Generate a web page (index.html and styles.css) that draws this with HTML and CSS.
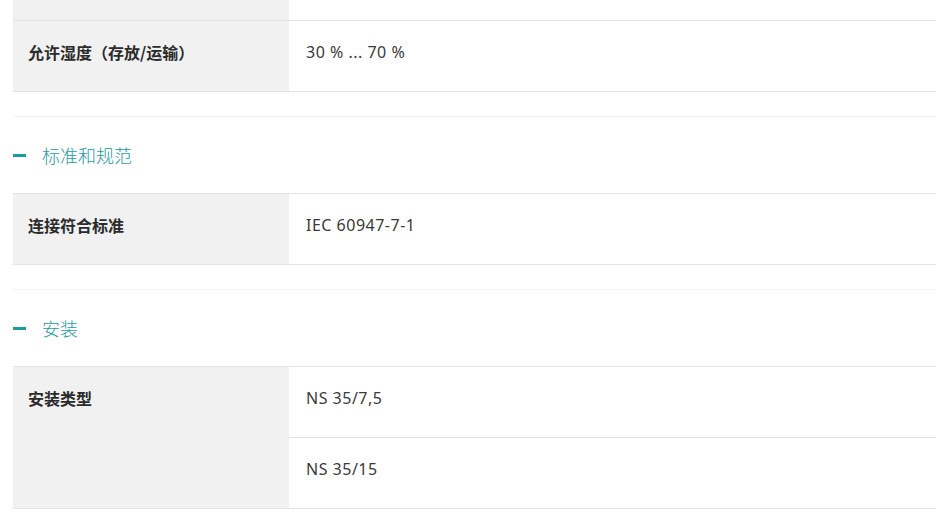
FILE: index.html
```html
<!DOCTYPE html>
<html lang="zh">
<head>
<meta charset="utf-8">
<link rel="stylesheet" href="styles.css">
</head>
<body>
<div class="page">
  <section class="group">
    <div class="table">
      <div class="row stub"><div class="label"></div><div class="values"></div></div>
      <div class="row">
        <div class="label">允许湿度（存放/运输）</div>
        <div class="values"><div class="value">30 % ... 70 %</div></div>
      </div>
    </div>
  </section>

  <section class="group">
    <h2 class="head"><span class="minus"></span>标准和规范</h2>
    <div class="table top">
      <div class="row">
        <div class="label">连接符合标准</div>
        <div class="values"><div class="value">IEC 60947-7-1</div></div>
      </div>
    </div>
  </section>

  <section class="group">
    <h2 class="head"><span class="minus"></span>安装</h2>
    <div class="table top">
      <div class="row">
        <div class="label">安装类型</div>
        <div class="values">
          <div class="value">NS 35/7,5</div>
          <div class="value">NS 35/15</div>
        </div>
      </div>
    </div>
  </section>
</div>
</body>
</html>
```
FILE: styles.css
```css
* { box-sizing: border-box; }
html, body { margin: 0; padding: 0; background: #fff; }
body {
  font-family: "Noto Sans", "Noto Sans CJK SC", sans-serif;
  color: #333;
}
.page {
  width: 923px;
  margin-left: 13px;
  overflow: hidden;
  height: 525px;
}
.group {
  padding-bottom: 24px;
  border-bottom: 1px solid #f3f3f4;
}
.head {
  margin: 0;
  height: 76px;
  display: flex;
  align-items: center;
  font-size: 18px;
  font-weight: 300;
  color: #1b9ca6;
  font-family: "Noto Sans CJK SC", sans-serif;
}
.minus {
  width: 13px;
  height: 3px;
  background: #1b9ca6;
  margin-right: 16px;
}
.table.top { border-top: 1px solid #e3e4e8; }
.row {
  display: grid;
  grid-template-columns: 276px 1fr;
  border-bottom: 1px solid #e3e4e8;
}
.row.stub { height: 21px; }
.label {
  background: #f1f1f1;
  padding: 21px 15px 0;
  font-size: 16px;
  line-height: 20px;
  font-weight: 700;
  color: #2b2b2b;
  font-family: "Noto Sans CJK SC", sans-serif;
}
.stub .label { padding: 0; }
.value {
  height: 70px;
  padding: 21px 17px 0;
  font-size: 16px;
  line-height: 20px;
  color: #3a3a3a;
  letter-spacing: 0.5px;
}
.value + .value { border-top: 1px solid #e3e4e8; height: 71px; }
```
